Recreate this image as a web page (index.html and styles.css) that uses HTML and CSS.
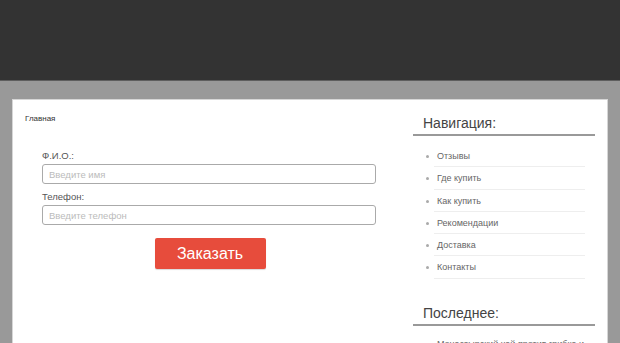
FILE: index.html
```html
<!DOCTYPE html>
<html lang="ru">
<head>
<meta charset="utf-8">
<title>Заказ</title>
<link rel="stylesheet" href="styles.css">
</head>
<body>
<header class="header"></header>
<div class="page">
  <main class="main">
    <div class="crumbs">Главная</div>
    <form class="form">
      <div class="field">
        <label class="label">Ф.И.О.:</label>
        <input class="input" type="text" placeholder="Введите имя">
      </div>
      <div class="field">
        <label class="label">Телефон:</label>
        <input class="input" type="text" placeholder="Введите телефон">
      </div>
      <div class="actions">
        <button class="btn" type="button">Заказать</button>
      </div>
    </form>
  </main>
  <aside class="sidebar">
    <section class="widget">
      <h3 class="widget-title">Навигация:</h3>
      <ul class="list">
        <li class="item">Отзывы</li>
        <li class="item">Где купить</li>
        <li class="item">Как купить</li>
        <li class="item">Рекомендации</li>
        <li class="item">Доставка</li>
        <li class="item">Контакты</li>
      </ul>
    </section>
    <section class="widget widget-latest">
      <h3 class="widget-title">Последнее:</h3>
      <ul class="list">
        <li class="item">Монастырский чай против грибка и ногтей</li>
      </ul>
    </section>
  </aside>
</div>
</body>
</html>
```
FILE: styles.css
```css
html, body {
  margin: 0;
  padding: 0;
}
body {
  background: #999999;
  font-family: "Liberation Sans", Arial, sans-serif;
  color: #444;
  height: 343px;
  overflow: hidden;
}
.header {
  height: 80px;
  background: #333333;
  border-bottom: 1px solid #5e5e5e;
}
.page {
  margin: 18px 12px 0 12px;
  background: #fff;
  border: 1px solid #d6d6d6;
  display: flex;
  gap: 13px;
  padding: 13px 12px 40px 12px;
  min-height: 300px;
}
.main {
  flex: 1;
}
.crumbs {
  font-size: 8px;
  line-height: 12px;
  color: #333;
}
.form {
  margin: 25px 0 0 17px;
  width: 334px;
}
.field {
  margin-bottom: 7px;
}
.label {
  display: block;
  font-size: 9.5px;
  line-height: 12px;
  color: #555;
  margin-bottom: 2px;
}
.input {
  display: block;
  box-sizing: border-box;
  width: 100%;
  height: 20px;
  margin: 0;
  border: 1px solid #aaaaaa;
  border-radius: 3px;
  padding: 0 6px;
  font-family: "Liberation Sans", Arial, sans-serif;
  font-size: 9.5px;
  color: #555;
  background: #fff;
}
.input::placeholder {
  color: #bbbbbb;
}
.actions {
  display: flex;
  justify-content: center;
  padding-top: 6px;
}
.btn {
  width: 111px;
  height: 31px;
  border: 0;
  border-radius: 2px;
  background: #e74c3c;
  color: #fff;
  font-family: "Liberation Sans", Arial, sans-serif;
  font-size: 16px;
  padding: 0;
  margin-left: 2px;
  box-shadow: 0 1px 1px rgba(0,0,0,0.15);
}
.sidebar {
  width: 182px;
  flex-shrink: 0;
  padding-top: 1px;
}
.widget {
  margin-bottom: 25px;
}
.widget-title {
  margin: 0;
  font-size: 14px;
  font-weight: normal;
  line-height: 18px;
  color: #444;
  padding: 0 0 2px 10px;
  border-bottom: 2px solid #999;
}
.list {
  list-style: none;
  margin: 9px 10px 0 10px;
  padding: 0;
}
.widget-latest .list {
  margin-top: 7px;
}
.item {
  display: flex;
  align-items: flex-start;
  font-size: 9px;
  line-height: 12px;
  color: #666;
  padding: 5px 0 5.3px 3px;
  background: linear-gradient(#eeeeee, #eeeeee) no-repeat right bottom / calc(100% - 11px) 1px;
}
.item::before {
  content: "";
  width: 3px;
  height: 3px;
  border-radius: 50%;
  background: #aaa;
  margin: 5px 8px 0 0;
  flex-shrink: 0;
}
```
